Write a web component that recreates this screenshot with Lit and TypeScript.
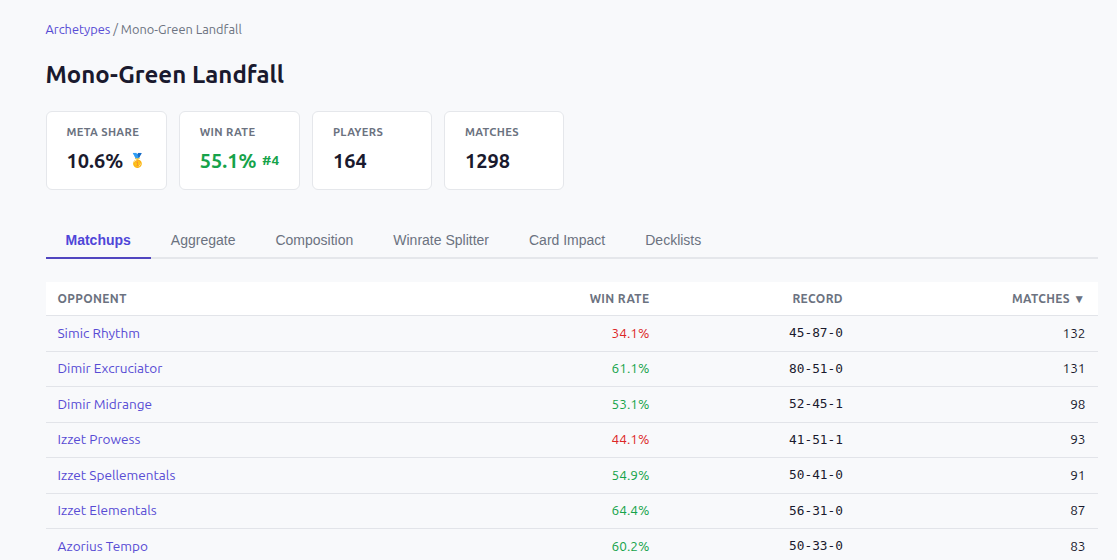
import { LitElement, html, css } from "lit";
import { customElement } from "lit/decorators.js";

interface Matchup {
  name: string;
  rate: number;
  record: string;
  matches: number;
}

const MATCHUPS: Matchup[] = [
  { name: "Simic Rhythm", rate: 34.1, record: "45-87-0", matches: 132 },
  { name: "Dimir Excruciator", rate: 61.1, record: "80-51-0", matches: 131 },
  { name: "Dimir Midrange", rate: 53.1, record: "52-45-1", matches: 98 },
  { name: "Izzet Prowess", rate: 44.1, record: "41-51-1", matches: 93 },
  { name: "Izzet Spellementals", rate: 54.9, record: "50-41-0", matches: 91 },
  { name: "Izzet Elementals", rate: 64.4, record: "56-31-0", matches: 87 },
  { name: "Azorius Tempo", rate: 60.2, record: "50-33-0", matches: 83 },
];

const TABS = ["Matchups", "Aggregate", "Composition", "Winrate Splitter", "Card Impact", "Decklists"];

@customElement("app-root")
export class AppRoot extends LitElement {
  static styles = css`
    :host {
      display: block;
      box-sizing: border-box;
      height: 560px;
      overflow: hidden;
      padding: 19px 19.5px 0 45.5px;
      background: #f8f9fb;
      color: #1a1a2e;
      font-family: Ubuntu, "Noto Sans", sans-serif;
      font-size: 13.6px;
    }
    a {
      color: #574bd4;
      text-decoration: none;
    }
    .crumbs {
      font-size: 12.8px;
      line-height: 20px;
      color: #6b7280;
      white-space: pre;
    }
    h1 {
      margin: 19px 0 0;
      font-size: 24px;
      line-height: 34px;
      font-weight: 600;
    }
    .cards {
      display: flex;
      gap: 12px;
      margin-top: 19px;
    }
    .card {
      box-sizing: border-box;
      width: 120px;
      height: 79px;
      padding: 12px 20px;
      background: #fff;
      border: 1px solid #e5e7eb;
      border-radius: 6px;
    }
    .wide {
      width: 121.2px;
    }
    .label {
      font-size: 11.2px;
      line-height: 17px;
      font-weight: 600;
      letter-spacing: 0.34px;
      color: #6b7280;
      white-space: nowrap;
    }
    .value {
      display: flex;
      align-items: center;
      height: 27px;
      margin-top: 6px;
      font-size: 20px;
      line-height: 27px;
      font-weight: 600;
      white-space: nowrap;
    }
    .good {
      color: #16a34a;
    }
    .bad {
      color: #dc2626;
    }
    .rank {
      margin-left: 5.6px;
      font-size: 13.6px;
    }
    .tabs {
      display: flex;
      box-sizing: border-box;
      height: 37px;
      margin-top: 32px;
      border-bottom: 2px solid #e5e7eb;
      font: 14px/36px "Liberation Sans", Arial, sans-serif;
      color: #6b7280;
    }
    .tab {
      height: 35px;
      padding: 0 20px;
      border-bottom: 2px solid transparent;
      white-space: nowrap;
    }
    .active {
      color: #4f46d8;
      font-weight: 700;
      border-color: #5146c0;
    }
    .table {
      margin-top: 23px;
    }
    .row {
      display: grid;
      grid-template-columns: 422.3px 193.6px 193.6px 242.5px;
      box-sizing: border-box;
      height: 35.5px;
      border-bottom: 1px solid #e2e4e9;
      line-height: 33.6px;
    }
    .cell {
      padding: 0.6px 12px 0;
      text-align: right;
    }
    .cell:first-child {
      text-align: left;
    }
    .head {
      height: 34px;
      line-height: 33px;
      background: #fff;
      font-size: 12px;
      font-weight: 600;
      letter-spacing: 0.36px;
      color: #6b7280;
    }
    .head .cell {
      padding-top: 0;
    }
    .cell.record {
      padding-top: 0;
      font-family: "DejaVu Sans Mono", monospace;
      font-size: 12.8px;
      line-height: 34.2px;
    }
  `;

  private row(m: Matchup) {
    return html`<div class="row">
      <div class="cell"><a>${m.name}</a></div>
      <div class="cell ${m.rate >= 50 ? "good" : "bad"}">${m.rate}%</div>
      <div class="cell record">${m.record}</div>
      <div class="cell">${m.matches}</div>
    </div>`;
  }

  render() {
    return html`
      <div class="crumbs"><a>Archetypes</a> / Mono-Green Landfall</div>
      <h1>Mono-Green Landfall</h1>
      <div class="cards">
        <div class="card wide"><div class="label">META SHARE</div><div class="value">10.6%<span class="rank">🥇</span></div></div>
        <div class="card wide"><div class="label">WIN RATE</div><div class="value good">55.1%<span class="rank">#4</span></div></div>
        <div class="card"><div class="label">PLAYERS</div><div class="value">164</div></div>
        <div class="card"><div class="label">MATCHES</div><div class="value">1298</div></div>
      </div>
      <div class="tabs">${TABS.map((t, i) => html`<div class="tab ${i === 0 ? "active" : ""}">${t}</div>`)}</div>
      <div class="table">
        <div class="row head">
          <div class="cell">OPPONENT</div>
          <div class="cell">WIN RATE</div>
          <div class="cell">RECORD</div>
          <div class="cell">MATCHES ▼</div>
        </div>
        ${MATCHUPS.map((m) => this.row(m))}
      </div>
    `;
  }
}
